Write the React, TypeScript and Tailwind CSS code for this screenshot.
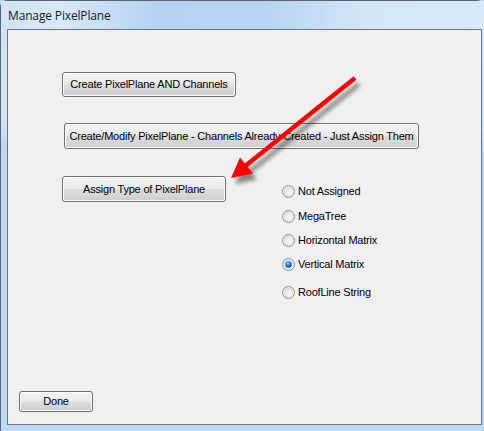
import React from "react";

const font = { fontFamily: '"Liberation Sans", Arial, sans-serif', letterSpacing: "-0.2px" };

function WinButton({ children, className }: { children: React.ReactNode; className?: string }) {
  return (
    <div
      className={
        "flex items-center justify-center whitespace-nowrap rounded-[3px] border border-[#707070] bg-[linear-gradient(#f2f2f2_0%,#ebebeb_48%,#dddddd_52%,#cfcfcf_100%)] text-[11px] text-black shadow-[inset_0_0_0_1px_#fcfcfc] " +
        (className ?? "")
      }
      style={font}
    >
      {children}
    </div>
  );
}

function Radio({ checked }: { checked?: boolean }) {
  return (
    <svg width="13" height="13" viewBox="0 0 13 13" className="shrink-0">
      <defs>
        <linearGradient id="rg" x1="0" y1="0" x2="1" y2="1">
          <stop offset="0" stopColor="#dcdcdc" />
          <stop offset="1" stopColor="#ffffff" />
        </linearGradient>
        <radialGradient id="rd" cx="0.4" cy="0.35" r="0.7">
          <stop offset="0" stopColor="#8fd4f8" />
          <stop offset="0.5" stopColor="#1e7fc4" />
          <stop offset="1" stopColor="#0e3f72" />
        </radialGradient>
      </defs>
      <circle cx="6.5" cy="6.5" r="6" fill="#f4f4f4" stroke="#8e8f8f" strokeWidth="1" />
      <circle cx="6.5" cy="6.5" r="4.5" fill="url(#rg)" stroke="#d0d0d0" strokeWidth="0.8" />
      {checked && <circle cx="6.5" cy="6.5" r="3.2" fill="url(#rd)" />}
    </svg>
  );
}

function RadioRow({ label, checked, className }: { label: string; checked?: boolean; className?: string }) {
  return (
    <div className={"flex h-[14px] items-center gap-[3px] " + (className ?? "")}>
      <Radio checked={checked} />
      <span className="whitespace-nowrap text-[11px] leading-none text-black" style={font}>
        {label}
      </span>
    </div>
  );
}

export default function App() {
  return (
    <div className="relative h-[431px] w-[484px] overflow-hidden bg-[#bcd8f4]">
      <div className="flex h-full w-full flex-col rounded-t-[7px] border-l border-t border-[#5a6470]">
        <div className="flex h-[28px] shrink-0 items-center bg-[#c2dbf4] bg-[linear-gradient(to_right,#cfe3f7,#d9e9f8_12%,#b4d3f2_32%,#b6d4f2_55%,#d3e6f8_75%,#d8e9f9)] pl-[7px] pt-[2px]">
          <span className="text-[12px] text-[#1a1a1a]" style={{ fontFamily: '"Open Sans", "Noto Sans", sans-serif', letterSpacing: "-0.15px" }}>
            Manage PixelPlane
          </span>
        </div>
        <div className="flex flex-1 flex-col bg-[#c2dbf4] bg-[linear-gradient(to_bottom,#cfe3f7,#d2e5f8_22%,#bcd8f4_30%,#bcd8f4)] pb-[6px] pl-[6px] pr-[2px]">
          <div className="flex flex-1 flex-col border border-[#6d7a86] bg-[#f0f0f0]">
            <WinButton className="ml-[54px] mt-[42px] h-[25px] w-[174px]">Create PixelPlane AND Channels</WinButton>
            <WinButton className="ml-[56px] mt-[26px] h-[26px] w-[355px]">
              Create/Modify PixelPlane - Channels Already Created - Just Assign Them
            </WinButton>
            <div className="mt-[27px] flex items-start">
              <WinButton className="ml-[54px] h-[26px] w-[164px]">Assign Type of PixelPlane</WinButton>
              <div className="ml-[56px] mt-[8px] flex flex-col">
                <RadioRow label="Not Assigned" />
                <RadioRow label="MegaTree" className="mt-[11px]" />
                <RadioRow label="Horizontal Matrix" className="mt-[10px]" />
                <RadioRow label="Vertical Matrix" checked className="mt-[10px]" />
                <RadioRow label="RoofLine String" className="mt-[14px]" />
              </div>
            </div>
            <div className="flex-1" />
            <WinButton className="mb-[12px] ml-[11px] h-[21px] w-[74px]">Done</WinButton>
          </div>
        </div>
      </div>
      <svg className="pointer-events-none absolute left-0 top-0" width="484" height="431" viewBox="0 0 484 431">
        <defs>
          <filter id="sh" x="-20%" y="-20%" width="140%" height="140%">
            <feGaussianBlur stdDeviation="2.2" />
          </filter>
        </defs>
        <g transform="translate(4,6)" filter="url(#sh)" opacity="0.45">
          <line x1="355" y1="78" x2="244" y2="167" stroke="#000" strokeWidth="4.5" />
          <polygon points="231,178 240,157.5 253,173.5" fill="#000" />
        </g>
        <line x1="355" y1="78" x2="244" y2="167" stroke="#ff0000" strokeWidth="4.5" strokeLinecap="butt" />
        <polygon points="231,178 240,157.5 253,173.5" fill="#ff0000" />
      </svg>
    </div>
  );
}
